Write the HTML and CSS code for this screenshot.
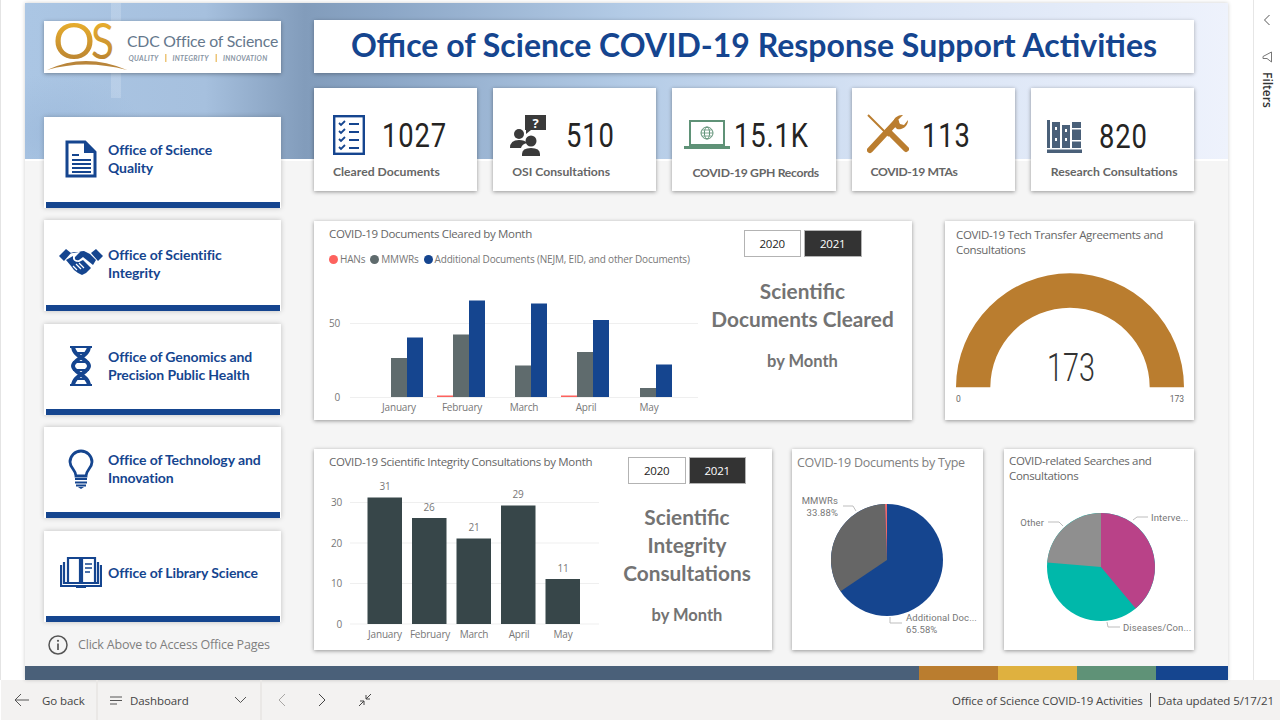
FILE: index.html
```html
<!DOCTYPE html>
<html lang="en">
<head>
    <meta charset="UTF-8">
    <meta name="viewport" content="width=device-width, initial-scale=1.0">
    <title>Office of Science COVID-19 Response Support Activities</title>
    <link rel="stylesheet" href="styles.css">
</head>
<body>

<div class="viewer">
    <div class="stage">
        <main class="canvas">
            <div class="report">
                <aside class="side">
                    <div class="logo">
                        <svg width="237" height="52" viewBox="44 21 237 52">
                            <defs>
                                <linearGradient id="gold" x1="0" y1="0" x2="0" y2="1">
                                    <stop offset="0" stop-color="#f6bb2c"/>
                                    <stop offset="1" stop-color="#b07a32"/>
                                </linearGradient>
                            </defs>
                            <text class="logo-os" x="53" y="59" fill="url(#gold)" textLength="42" lengthAdjust="spacingAndGlyphs">O</text>
                            <text class="logo-os" x="91" y="59" fill="url(#gold)" textLength="23" lengthAdjust="spacingAndGlyphs">S</text>
                            <path d="M47 70 Q85 52 127 70 Q85 59 47 70Z" fill="#b9853a"/>
                            <text class="logo-name" x="127" y="47">CDC Office of Science</text>
                            <text class="logo-tag" x="128.500" y="61">QUALITY</text>
                            <rect x="165" y="54" width="1.500" height="8" fill="#edc578"/>
                            <text class="logo-tag" x="172.500" y="61">INTEGRITY</text>
                            <rect x="215.500" y="54" width="1.500" height="8" fill="#edc578"/>
                            <text class="logo-tag" x="223" y="61">INNOVATION</text>
                        </svg>
                    </div>

                    <nav class="office-list">
                        <a class="office">
                            <span class="office-icon">
                                <svg width="32" height="38" viewBox="0 0 32 38">
                                    <path d="M2 2H20L30 12V36H2Z" fill="none" stroke="#15458f" stroke-width="3"/>
                                    <path d="M19 1V13H31Z" fill="#15458f"/>
                                    <path d="M7 15H14M7 20H26M7 24H26M7 28H26M7 32H26" stroke="#15458f" stroke-width="2.200"/>
                                </svg>
                            </span>
                            <span class="office-name">Office of Science<br>Quality</span>
                        </a>
                        <a class="office">
                            <span class="office-icon">
                                <svg width="44" height="28" viewBox="0 0 44 28">
                                    <path d="M0 8L7 1L12 5L5 13Z M44 8L37 1L32 5L39 13Z" fill="#15458f"/>
                                    <path d="M8 6L15 4H21L16 9Q15 13 20 12L24 9L34 17L37 12L31 6L25 3Q22 3 20 4" fill="#15458f"/>
                                    <path d="M7 12L12 18L15 22L19 25L23 27L27 25L32 20L24 12L20 14Q13 14 14 8Z" fill="#15458f"/>
                                    <path d="M14 18L18 22M17 16L22 21M20 15L25 20" stroke="#fff" stroke-width="1.200"/>
                                </svg>
                            </span>
                            <span class="office-name">Office of Scientific<br>Integrity</span>
                        </a>
                        <a class="office">
                            <span class="office-icon">
                                <svg width="22" height="42" viewBox="0 0 22 42">
                                    <path d="M3 1C3 12 19 14 19 21C19 28 3 30 3 41" fill="none" stroke="#15458f" stroke-width="4"/>
                                    <path d="M19 1C19 12 3 14 3 21C3 28 19 30 19 41" fill="none" stroke="#15458f" stroke-width="4"/>
                                    <path d="M0 2H22M4 8H18M3 17H19M3 25H19M4 34H18M0 40H22" stroke="#15458f" stroke-width="2.200"/>
                                </svg>
                            </span>
                            <span class="office-name">Office of Genomics and<br>Precision Public Health</span>
                        </a>
                        <a class="office">
                            <span class="office-icon">
                                <svg width="26" height="40" viewBox="0 0 26 40">
                                    <path d="M8 27C8 21 2 19 2 13A11 11 0 0 1 24 13C24 19 18 21 18 27Z" fill="none" stroke="#15458f" stroke-width="2.800"/>
                                    <path d="M7 30H19M7 33.500H19M8 36.500H18" stroke="#15458f" stroke-width="2"/>
                                    <path d="M10 38H16L13 40Z" fill="#15458f"/>
                                </svg>
                            </span>
                            <span class="office-name">Office of Technology and<br>Innovation</span>
                        </a>
                        <a class="office">
                            <span class="office-icon">
                                <svg width="42" height="32" viewBox="0 0 42 32">
                                    <path d="M8 1H20V26H8ZM22 1H35V26H22Z" fill="none" stroke="#15458f" stroke-width="2.200"/>
                                    <path d="M4 5V26H38V5" fill="none" stroke="#15458f" stroke-width="2.200"/>
                                    <path d="M1 8V29H41V8" fill="none" stroke="#15458f" stroke-width="2.200"/>
                                    <path d="M16 29H26V31H16Z" fill="#15458f"/>
                                    <path d="M25 7H32M25 11H32M25 15H30" stroke="#15458f" stroke-width="1.600"/>
                                </svg>
                            </span>
                            <span class="office-name">Office of Library Science</span>
                        </a>
                    </nav>

                    <div class="hint">
                        <svg width="20" height="20" viewBox="0 0 20 20">
                            <circle cx="10" cy="10" r="9" fill="none" stroke="#555" stroke-width="1.500"/>
                            <path d="M10 8.500V15" stroke="#555" stroke-width="1.700"/>
                            <circle cx="10" cy="5.800" r="1.100" fill="#555"/>
                        </svg>
                        <span>Click Above to Access Office Pages</span>
                    </div>
                </aside>

                <section class="content">
                    <h1 class="page-title">Office of Science COVID-19 Response Support Activities</h1>

                    <div class="kpi-row">
                        <div class="kpi kpi-docs">
                            <div class="kpi-top">
                                <svg width="32" height="40" viewBox="0 0 32 40">
                                    <rect x="1.200" y="1.200" width="29.600" height="37.600" fill="none" stroke="#15458f" stroke-width="2.400"/>
                                    <path d="M6 8L8 10L12 6M6 16L8 18L12 14M6 24L8 26L12 22M6 32L8 34L12 30" fill="none" stroke="#15458f" stroke-width="1.800"/>
                                    <path d="M16 9H26M16 17H26M16 25H26M16 33H26" stroke="#15458f" stroke-width="1.800"/>
                                </svg>
                                <span class="kpi-value">1027</span>
                            </div>
                            <div class="kpi-label">Cleared Documents</div>
                        </div>
                        <div class="kpi kpi-osi">
                            <div class="kpi-top">
                                <svg width="36" height="41" viewBox="0 0 36 41">
                                    <path d="M15 0H36V15H21L16 19V15H15Z" fill="#3a3a3a"/>
                                    <circle cx="9" cy="19" r="5" fill="#3a3a3a"/>
                                    <path d="M0 33Q0 25 9 25Q15 25 17 28Q12 29 11 33Z" fill="#3a3a3a"/>
                                    <circle cx="21" cy="26" r="5.500" fill="#3a3a3a"/>
                                    <path d="M12 41V39Q12 33 21 33Q30 33 30 39V41Z" fill="#3a3a3a"/>
                                    <text class="kpi-mark" x="25.500" y="12.500">?</text>
                                </svg>
                                <span class="kpi-value">510</span>
                            </div>
                            <div class="kpi-label">OSI Consultations</div>
                        </div>
                        <div class="kpi kpi-gph">
                            <div class="kpi-top">
                                <svg width="46" height="30" viewBox="0 0 46 30">
                                    <rect x="6" y="1" width="34" height="24" fill="none" stroke="#5f9277" stroke-width="2"/>
                                    <path d="M0 27.500H46" stroke="#5f9277" stroke-width="3"/>
                                    <circle cx="23" cy="13" r="6" fill="none" stroke="#5f9277" stroke-width="1"/>
                                    <ellipse cx="23" cy="13" rx="2.600" ry="6" fill="none" stroke="#5f9277" stroke-width="1"/>
                                    <path d="M17 13H29M18 10H28M18 16H28" stroke="#5f9277" stroke-width=".8"/>
                                </svg>
                                <span class="kpi-value">15.1K</span>
                            </div>
                            <div class="kpi-label">COVID-19 GPH Records</div>
                        </div>
                        <div class="kpi kpi-mta">
                            <div class="kpi-top">
                                <svg width="42" height="42" viewBox="0 0 42 42">
                                    <path d="M1 1L22 22" stroke="#ba7d2f" stroke-width="2"/>
                                    <path d="M21 17L39 35" stroke="#ba7d2f" stroke-width="6" stroke-linecap="round"/>
                                    <path d="M29 8L3 36" stroke="#ba7d2f" stroke-width="6" stroke-linecap="round"/>
                                    <path d="M26 11A9 9 0 0 1 36 1L31 6L33 10L37 11L41 6A9 9 0 0 1 30 15Z" fill="#ba7d2f"/>
                                </svg>
                                <span class="kpi-value">113</span>
                            </div>
                            <div class="kpi-label">COVID-19 MTAs</div>
                        </div>
                        <div class="kpi kpi-lib">
                            <div class="kpi-top">
                                <svg width="35" height="33" viewBox="0 0 35 33">
                                    <path d="M0 0H3V28H0ZM5 2H13V28H5ZM15 5H23V28H15ZM25 2H34V28H25ZM0 29.500H35V33H0Z" fill="#4a6079"/>
                                    <path d="M8 7H10V10H8ZM18 9H20V12H18ZM8 18H10V21H8ZM18 18H20V21H18ZM25 8H34V9.500H25ZM25 20H34V21.500H25Z" fill="#fff"/>
                                </svg>
                                <span class="kpi-value">820</span>
                            </div>
                            <div class="kpi-label">Research Consultations</div>
                        </div>
                    </div>

                    <div class="chart-row chart-row-top">
                        <div class="card card-docs">
                            <div class="card-main">
                                <h2 class="card-title">COVID-19 Documents Cleared by Month</h2>
                                <div class="legend">
                                    <span class="legend-item"><i class="dot dot-red"></i>HANs</span>
                                    <span class="legend-item"><i class="dot dot-grey"></i>MMWRs</span>
                                    <span class="legend-item"><i class="dot dot-blue"></i>Additional Documents (NEJM, EID, and other Documents)</span>
                                </div>
                                <svg class="plot" width="390" height="144" viewBox="314 276 390 144">
                                    <path class="grid" d="M350 323.500H698M350 397.500H698"/>
                                    <text class="axis end" x="340" y="327">50</text>
                                    <text class="axis end" x="340" y="401">0</text>
                                    <g class="bar-grey">
                                        <rect x="391" y="358" width="16" height="39"/>
                                        <rect x="453" y="334.500" width="16" height="62.500"/>
                                        <rect x="515" y="365.500" width="16" height="31.500"/>
                                        <rect x="577" y="352" width="16" height="45"/>
                                        <rect x="640" y="388" width="16" height="9"/>
                                    </g>
                                    <g class="bar-blue">
                                        <rect x="407" y="337.500" width="16" height="59.500"/>
                                        <rect x="469" y="300.500" width="16" height="96.500"/>
                                        <rect x="531" y="303.500" width="16" height="93.500"/>
                                        <rect x="593" y="320" width="16" height="77"/>
                                        <rect x="656" y="364.500" width="16" height="32.500"/>
                                    </g>
                                    <g class="bar-red">
                                        <rect x="437" y="395.500" width="16" height="1.500"/>
                                        <rect x="561" y="395.500" width="16" height="1.500"/>
                                    </g>
                                    <text class="axis mid" x="399" y="411">January</text>
                                    <text class="axis mid" x="462" y="411">February</text>
                                    <text class="axis mid" x="524" y="411">March</text>
                                    <text class="axis mid" x="586" y="411">April</text>
                                    <text class="axis mid" x="649" y="411">May</text>
                                </svg>
                            </div>
                            <div class="card-side card-side-docs">
                                <div class="toggle">
                                    <span class="toggle-btn">2020</span>
                                    <span class="toggle-btn active">2021</span>
                                </div>
                                <div class="side-title">Scientific<br>Documents Cleared</div>
                                <div class="side-sub">by Month</div>
                            </div>
                        </div>

                        <div class="card card-gauge">
                            <h2 class="card-title wrap">COVID-19 Tech Transfer Agreements and Consultations</h2>
                            <svg class="plot" width="249" height="160" viewBox="945 260 249 160">
                                <path d="M956 387.300A114 114 0 0 1 1184 387.300H1149.700A79.700 79.700 0 0 0 990.300 387.300Z" fill="#ba7d2f"/>
                                <text class="gauge-value" x="1047" y="381" textLength="48" lengthAdjust="spacingAndGlyphs">173</text>
                                <text class="gauge-end" x="956" y="402">0</text>
                                <text class="gauge-end end" x="1184" y="402">173</text>
                            </svg>
                        </div>
                    </div>

                    <div class="chart-row chart-row-bottom">
                        <div class="card card-integrity">
                            <div class="card-main">
                                <h2 class="card-title">COVID-19 Scientific Integrity Consultations by Month</h2>
                                <svg class="plot" width="300" height="178" viewBox="314 472 300 178">
                                    <path class="grid" d="M350 502.500H599M350 543H599M350 583.500H599M350 624H599"/>
                                    <text class="axis end" x="342" y="506">30</text>
                                    <text class="axis end" x="342" y="547">20</text>
                                    <text class="axis end" x="342" y="587">10</text>
                                    <text class="axis end" x="342" y="628">0</text>
                                    <g class="bar-slate">
                                        <rect x="367.500" y="497.500" width="34.500" height="126.500"/>
                                        <rect x="412" y="518" width="34.500" height="106"/>
                                        <rect x="456.500" y="538.500" width="34.500" height="85.500"/>
                                        <rect x="501" y="505.500" width="34.500" height="118.500"/>
                                        <rect x="545.500" y="579" width="34.500" height="45"/>
                                    </g>
                                    <text class="axis mid" x="385" y="490">31</text>
                                    <text class="axis mid" x="429" y="511">26</text>
                                    <text class="axis mid" x="474" y="531">21</text>
                                    <text class="axis mid" x="518" y="498">29</text>
                                    <text class="axis mid" x="563" y="572">11</text>
                                    <text class="axis mid" x="385" y="638">January</text>
                                    <text class="axis mid" x="430" y="638">February</text>
                                    <text class="axis mid" x="474" y="638">March</text>
                                    <text class="axis mid" x="519" y="638">April</text>
                                    <text class="axis mid" x="563" y="638">May</text>
                                </svg>
                            </div>
                            <div class="card-side card-side-integrity">
                                <div class="toggle">
                                    <span class="toggle-btn">2020</span>
                                    <span class="toggle-btn active">2021</span>
                                </div>
                                <div class="side-title">Scientific<br>Integrity<br>Consultations</div>
                                <div class="side-sub">by Month</div>
                            </div>
                        </div>

                        <div class="card card-type">
                            <h2 class="card-title big">COVID-19 Documents by Type</h2>
                            <svg class="plot" width="191" height="176" viewBox="792 474 191 176">
                                <circle cx="887" cy="560" r="56" fill="#15458f"/>
                                <path d="M887 560L840.600 591.300A56 56 0 0 1 885 504Z" fill="#666"/>
                                <path d="M887 560L885 504.030A56 56 0 0 1 887 504Z" fill="#ee6a6a"/>
                                <path class="leader" d="M843 506H853L856 511M890 617V623H902"/>
                                <text class="pie-label end" x="838" y="504">MMWRs</text>
                                <text class="pie-label end" x="838" y="516">33.88%</text>
                                <text class="pie-label" x="906" y="621">Additional Doc...</text>
                                <text class="pie-label" x="906" y="633">65.58%</text>
                            </svg>
                        </div>

                        <div class="card card-search">
                            <h2 class="card-title wrap">COVID-related Searches and Consultations</h2>
                            <svg class="plot" width="190" height="162" viewBox="1004 488 190 162">
                                <circle cx="1101" cy="567" r="54" fill="#00b8aa"/>
                                <path d="M1101 567V513A54 54 0 0 1 1135.700 608.400Z" fill="#b94288"/>
                                <path d="M1101 567L1047.200 562.500A54 54 0 0 1 1101 513Z" fill="#8f8f8f"/>
                                <path class="leader" d="M1048 522H1059L1063 526M1133 520L1137 517H1148M1107 622L1108 627H1120"/>
                                <text class="pie-label end" x="1044" y="526">Other</text>
                                <text class="pie-label" x="1151" y="521">Interve...</text>
                                <text class="pie-label" x="1123" y="631">Diseases/Con...</text>
                            </svg>
                        </div>
                    </div>
                </section>
            </div>

            <div class="band">
                <span class="band-slate"></span>
                <span class="band-bronze"></span>
                <span class="band-yellow"></span>
                <span class="band-green"></span>
                <span class="band-blue"></span>
            </div>
        </main>

        <aside class="filters">
            <svg width="8" height="12" viewBox="0 0 8 12">
                <path d="M6.500 1L1.500 6L6.500 11" fill="none" stroke="#555" stroke-width="1"/>
            </svg>
            <svg class="filters-funnel" width="10" height="12" viewBox="0 0 10 12">
                <path d="M9.500 1V11L5 7.500H1L1 5.500Z" fill="none" stroke="#777" stroke-width="1"/>
            </svg>
            <span class="filters-label">Filters</span>
        </aside>
    </div>

    <footer class="toolbar">
        <div class="tool tool-back">
            <svg width="15" height="14" viewBox="0 0 15 14">
                <path d="M7 1L1 7L7 13M1 7H15" fill="none" stroke="#555" stroke-width="1"/>
            </svg>
            <span>Go back</span>
        </div>
        <div class="tool tool-page">
            <svg width="13" height="9" viewBox="0 0 13 9">
                <path d="M0 1H12M0 4.500H12M0 8H7" stroke="#555" stroke-width="1"/>
            </svg>
            <span>Dashboard</span>
            <svg class="tool-caret" width="13" height="8" viewBox="0 0 13 8">
                <path d="M1 1L6.500 6.500L12 1" fill="none" stroke="#555" stroke-width="1"/>
            </svg>
        </div>
        <div class="tool-nav">
            <svg width="8" height="14" viewBox="0 0 8 14">
                <path d="M7 1L1 7L7 13" fill="none" stroke="#a8a6a4" stroke-width="1"/>
            </svg>
            <svg width="8" height="14" viewBox="0 0 8 14">
                <path d="M1 1L7 7L1 13" fill="none" stroke="#444" stroke-width="1"/>
            </svg>
            <svg width="14" height="14" viewBox="0 0 14 14">
                <path d="M13 1L8 6M8 2V6H12M1 13L6 8M2 8H6V12" fill="none" stroke="#444" stroke-width="1"/>
            </svg>
        </div>
        <div class="tool-status">
            <span>Office of Science COVID-19 Activities</span>
            <i class="tool-pipe"></i>
            <span>Data updated 5/17/21</span>
        </div>
    </footer>
</div>

</body>
</html>
```

FILE: styles.css
```css
body {
    margin: 0;
    background-color: #ffffff;
    font-family: "Open Sans", sans-serif;
    color: #333333;
}

.viewer {
    height: 728px;
    overflow: hidden;
}

.stage {
    display: flex;
    height: 680px;
    padding-left: 25px;
    box-sizing: border-box;
    border-left: 1px solid #e4e4e4;
}

.canvas {
    width: 1203px;
    height: 677px;
    margin: 3px 0 0 -1px;
    display: flex;
    flex-direction: column;
    box-shadow: 0 0 4px rgba(0, 0, 0, 0.2);
    background-color: #f5f5f5;
    background-image:
        linear-gradient(#ffffff, #ffffff),
        radial-gradient(ellipse 90px 60px at 30px 130px, rgba(150, 180, 215, 0.55), transparent),
        linear-gradient(90deg, transparent 86px, rgba(220, 232, 246, 0.3) 86px, rgba(220, 232, 246, 0.3) 96px, transparent 96px),
        linear-gradient(90deg, #abc6e4 0, #a6c0de 180px, #829cbb 280px, #8ba6c6 360px, #b3cbe6 600px, #d6e2f4 850px, #eef2fc 1203px);
    background-size: 100% 2px, 100% 156px, 100% 95px, 100% 156px;
    background-position: 0 156px, 0 0, 0 0, 0 0;
    background-repeat: no-repeat;
}

.report {
    flex: 1;
    display: flex;
    gap: 33px;
    padding: 17px 0 0 19px;
    min-height: 0;
}

/* left column */
.side {
    width: 237px;
    padding-top: 1px;
}

.logo {
    height: 52px;
    background-color: #ffffff;
    box-shadow: 0 1px 4px rgba(0, 0, 0, 0.35);
}

.logo svg {
    display: block;
    overflow: visible;
}

.logo-os {
    font-family: Lato, sans-serif;
    font-size: 50px;
}

.logo-name {
    font-family: Lato, sans-serif;
    font-size: 15.800px;
    fill: #65778c;
    letter-spacing: -0.200px;
}

.logo-tag {
    font-family: Lato, sans-serif;
    font-size: 7px;
    font-style: italic;
    font-weight: 700;
    fill: #8794a3;
    letter-spacing: 0.300px;
}

.office-list {
    display: flex;
    flex-direction: column;
    gap: 12.400px;
    margin-top: 44px;
}

.office {
    display: flex;
    align-items: center;
    height: 91px;
    box-sizing: border-box;
    padding-bottom: 8px;
    background: #ffffff linear-gradient(#15458f, #15458f) 2px 100% / calc(100% - 3px) 6px no-repeat;
    box-shadow: 0 0 5px rgba(0, 0, 0, 0.22);
    font-family: Lato, sans-serif;
    font-size: 14px;
    font-weight: 700;
    line-height: 18px;
    color: #15458f;
    letter-spacing: -0.100px;
}

.office:nth-child(2) .office-name {
    margin-top: 4px;
}

.office:nth-child(3),
.office:nth-child(5) {
    padding-bottom: 6px;
}

.office-icon {
    width: 64px;
    display: flex;
    justify-content: center;
    padding-left: 10px;
    box-sizing: border-box;
    flex-shrink: 0;
}

.hint {
    display: flex;
    align-items: center;
    gap: 10px;
    margin: 13px 0 0 4px;
    font-size: 12.500px;
    letter-spacing: -0.200px;
    color: #7f7f7f;
}

/* right column */
.content {
    width: 880px;
}

.page-title {
    height: 53px;
    margin: 0;
    line-height: 50px;
    text-align: center;
    font-family: Lato, sans-serif;
    font-size: 32px;
    font-weight: 700;
    color: #15458f;
    background-color: #ffffff;
    box-shadow: 0 1px 4px rgba(0, 0, 0, 0.3);
}

.kpi-row {
    display: flex;
    gap: 16px;
    margin-top: 15px;
}

.kpi {
    flex: none;
    width: 163.200px;
    height: 103px;
    padding-top: 17px;
    box-sizing: border-box;
    background-color: #ffffff;
    box-shadow: 0 1px 4px rgba(0, 0, 0, 0.4);
}

.kpi-top {
    display: flex;
    align-items: center;
    height: 60px;
}

.kpi-value {
    font-family: Roboto, sans-serif;
    font-size: 33px;
    font-weight: 400;
    letter-spacing: 1px;
    color: #252423;
    transform: scaleX(0.83);
    transform-origin: 0 50%;
}

.kpi-label {
    margin-top: -1px;
    font-family: Lato, sans-serif;
    font-size: 12.200px;
    font-weight: 700;
    color: #666666;
    line-height: 16px;
    white-space: nowrap;
}

.kpi-mark {
    font-family: "Open Sans", sans-serif;
    font-size: 13px;
    font-weight: 700;
    fill: #ffffff;
    text-anchor: middle;
}

.kpi-docs { padding-left: 19px; }
.kpi-docs .kpi-value { margin-left: 17px; }
.kpi-osi { padding-left: 17px; }
.kpi-osi .kpi-value { margin-left: 20px; }
.kpi-osi .kpi-label { margin-left: 2px; }
.kpi-gph { padding-left: 12px; }
.kpi-gph .kpi-value { margin-left: 4px; }
.kpi-gph .kpi-label { margin: 0 0 0 8px; letter-spacing: -0.300px; }
.kpi-mta { padding-left: 15px; }
.kpi-mta .kpi-value { margin-left: 13px; }
.kpi-mta .kpi-label { margin-left: 4px; letter-spacing: -0.400px; }
.kpi-lib { padding-left: 16px; }
.kpi-lib .kpi-top { padding-top: 1px; }
.kpi-lib .kpi-value { margin-left: 17px; }
.kpi-lib .kpi-label { margin: -2px 0 0 4px; }

.chart-row {
    display: flex;
}

.chart-row-top {
    margin-top: 30px;
    gap: 33px;
}

.chart-row-bottom {
    margin-top: 29px;
    gap: 20px;
}

.card {
    display: flex;
    background-color: #ffffff;
    box-shadow: 0 1px 4px rgba(0, 0, 0, 0.4);
}

.card-docs {
    width: 598px;
    height: 199px;
}

.card-gauge {
    width: 249px;
    height: 199px;
    flex-direction: column;
}

.card-integrity {
    width: 458px;
    height: 201px;
}

.card-type {
    width: 191px;
    height: 201px;
    flex-direction: column;
}

.card-search {
    width: 190px;
    height: 201px;
    margin-left: 1px;
    flex-direction: column;
}

.card-main {
    width: 390px;
    height: 100%;
    display: flex;
    flex-direction: column;
}

.card-integrity .card-main {
    width: 286px;
}

.card-title {
    margin: 0;
    padding: 5px 10px 0 15px;
    font-size: 11.500px;
    font-weight: 400;
    line-height: 16px;
    letter-spacing: -0.330px;
    color: #666666;
    white-space: nowrap;
}

.card-gauge .card-title,
.card-search .card-title {
    padding: 6px 10px 0 11px;
    white-space: normal;
    line-height: 15px;
}

.card-search .card-title {
    padding: 4px 0 0 5px;
}

.card-title.big {
    padding: 4px 0 0 5px;
    font-size: 12.500px;
    line-height: 20px;
    letter-spacing: -0.250px;
    color: #808080;
}

.legend {
    display: flex;
    gap: 5px;
    height: 16px;
    padding: 9px 0 0 15px;
    font-size: 10px;
    line-height: 16px;
    letter-spacing: -0.180px;
    color: #777777;
    white-space: nowrap;
}

.legend-item {
    display: flex;
    align-items: center;
}

.dot {
    width: 9px;
    height: 9px;
    margin-right: 2px;
    border-radius: 50%;
}

.dot-red { background-color: #fd625e; }
.dot-grey { background-color: #5f6b6d; }
.dot-blue { background-color: #15458f; }

.plot {
    display: block;
    flex-shrink: 0;
    margin-top: auto;
}

.grid {
    fill: none;
    stroke: #efefef;
    stroke-width: 1;
}

.axis {
    font-family: "Open Sans", sans-serif;
    font-size: 10px;
    letter-spacing: -0.200px;
    fill: #777777;
}

.end { text-anchor: end; }
.mid { text-anchor: middle; }

.bar-grey { fill: #5f6b6d; }
.bar-blue { fill: #15458f; }
.bar-red { fill: #fd625e; }
.bar-slate { fill: #374649; }

.card-side {
    flex: 1;
    display: flex;
    flex-direction: column;
    align-items: center;
}

.card-side-docs {
    padding-top: 9px;
    margin-right: 11px;
}

.card-side-integrity {
    padding-top: 8px;
    margin-left: 2px;
}

.toggle {
    display: flex;
    gap: 3px;
}

.toggle-btn {
    width: 57.500px;
    height: 27px;
    box-sizing: border-box;
    border: 1px solid #b3b3b3;
    background-color: #ffffff;
    font-size: 11.500px;
    line-height: 25px;
    letter-spacing: -0.200px;
    text-align: center;
    color: #252423;
}

.toggle-btn.active {
    background-color: #333333;
    color: #ffffff;
}

.side-title {
    margin-top: 20px;
    font-family: Lato, sans-serif;
    font-size: 20.800px;
    font-weight: 700;
    line-height: 28px;
    text-align: center;
    white-space: nowrap;
    color: #737373;
}

.side-sub {
    margin-top: 14px;
    font-family: Lato, sans-serif;
    font-size: 16.500px;
    font-weight: 700;
    line-height: 28px;
    color: #737373;
}

.card-side-integrity .side-title {
    margin-top: 19px;
}

.gauge-value {
    font-family: Roboto, sans-serif;
    font-size: 39px;
    font-weight: 300;
    fill: #333333;
}

.gauge-end {
    font-family: Roboto, sans-serif;
    font-size: 8.500px;
    fill: #666666;
}

.pie-label {
    font-family: Roboto, sans-serif;
    font-size: 9.500px;
    letter-spacing: 0.100px;
    fill: #777777;
}

.leader {
    fill: none;
    stroke: #bdbdbd;
    stroke-width: 1;
}

.band {
    display: flex;
    height: 14px;
    margin-top: auto;
    flex-shrink: 0;
}

.band span {
    width: 79px;
}

.band .band-slate { flex: 1; background-color: #4a6079; }
.band-bronze { background-color: #ba7d2f; }
.band-yellow { background-color: #dfb13f; }
.band-green { background-color: #5f9277; }
.band .band-blue { width: 72px; background-color: #15458f; }

/* filter pane */
.filters {
    width: 27px;
    margin-left: 25px;
    box-sizing: border-box;
    border-left: 1px solid #e6e6e6;
    display: flex;
    flex-direction: column;
    align-items: center;
    padding-top: 14px;
}

.filters-funnel {
    margin-top: 25px;
}

.filters-label {
    margin-top: 9px;
    writing-mode: vertical-rl;
    font-size: 12px;
    font-weight: 600;
    color: #333333;
}

/* bottom toolbar */
.toolbar {
    display: flex;
    align-items: center;
    height: 40px;
    margin-left: 1px;
    padding-right: 6px;
    background-color: #f3f2f1;
    font-size: 11.500px;
    letter-spacing: -0.070px;
    color: #444444;
}

.tool {
    display: flex;
    align-items: center;
    height: 100%;
    box-sizing: border-box;
    border-right: 2px solid #eae8e6;
}

.tool-back {
    width: 97px;
    padding-left: 13px;
    gap: 13px;
}

.tool-page {
    width: 164px;
    padding-left: 12px;
    gap: 7px;
}

.tool-caret {
    margin-left: auto;
    margin-right: 13px;
}

.tool-nav {
    display: flex;
    align-items: center;
    gap: 32px;
    padding-left: 16px;
}

.tool-status {
    display: flex;
    align-items: center;
    gap: 7px;
    margin-left: auto;
}

.tool-pipe {
    width: 1px;
    height: 14px;
    background-color: #555555;
}
```
